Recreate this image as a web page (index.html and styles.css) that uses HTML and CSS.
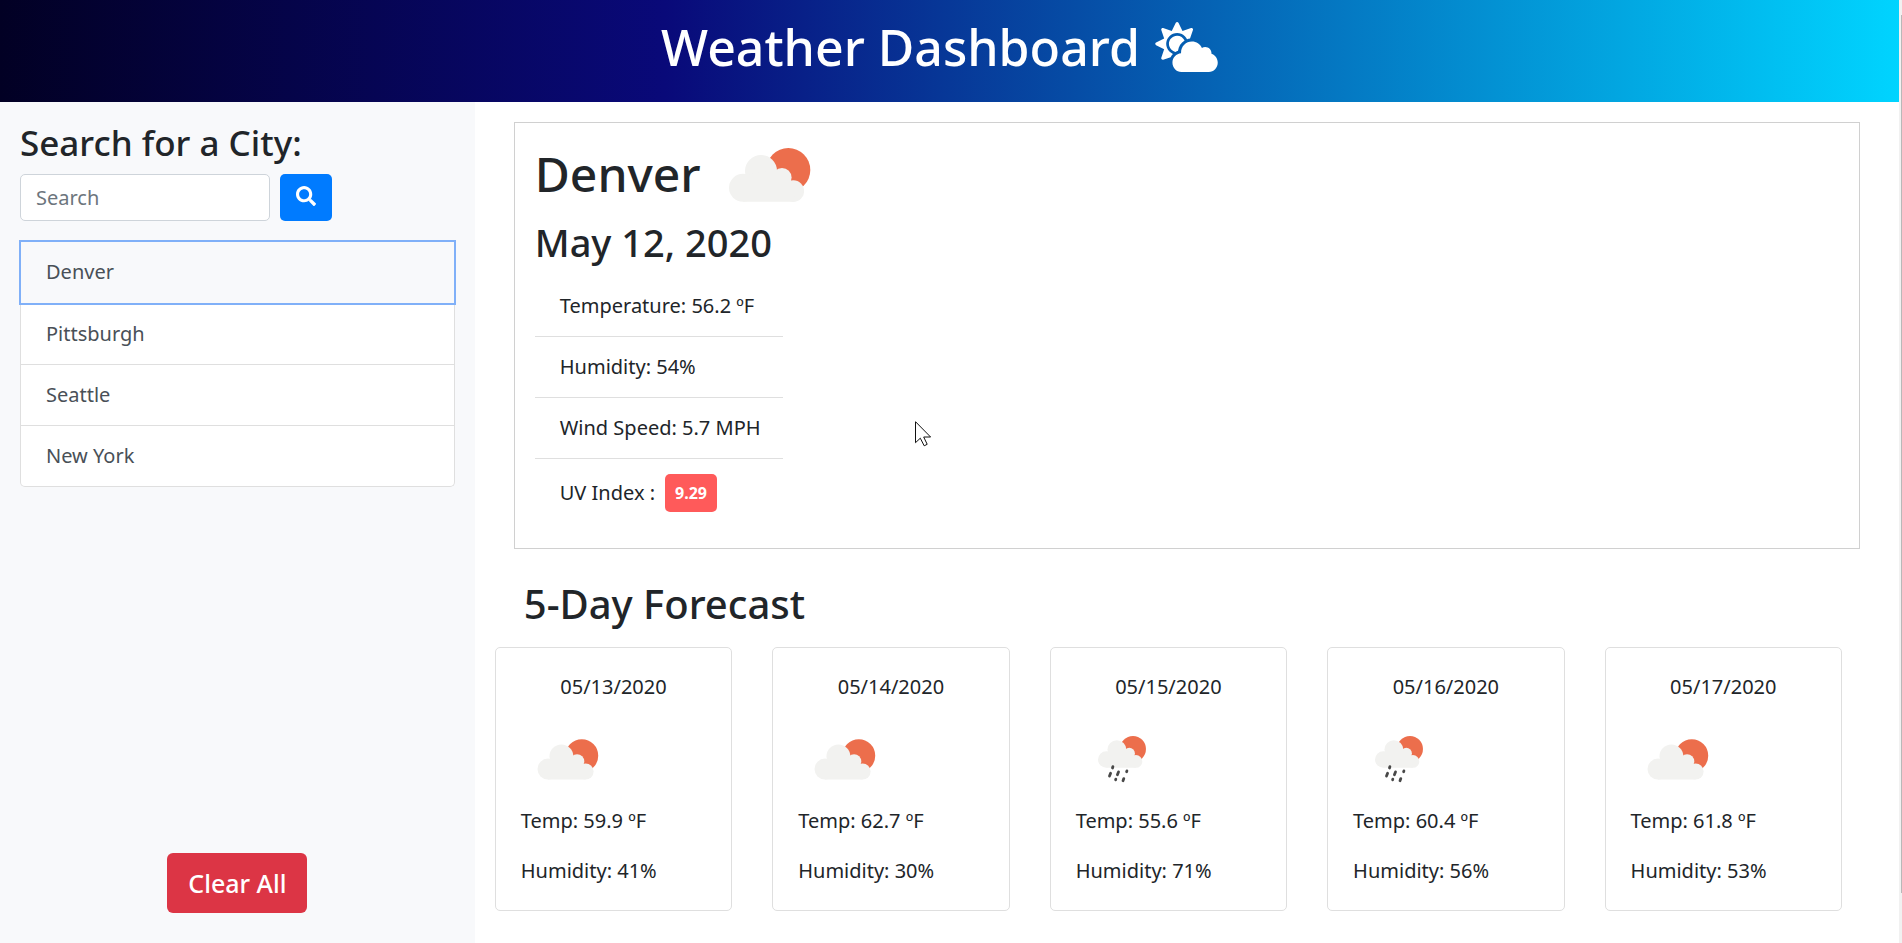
FILE: index.html
```html
<!DOCTYPE html>
<html lang="en">
<head>
<meta charset="utf-8">
<title>Weather Dashboard</title>
<link rel="stylesheet" href="styles.css">
</head>
<body>
<svg class="defs" aria-hidden="true">
  <defs>
    <g id="sun-cloud">
      <circle cx="59.3" cy="22" r="22" fill="#ec6e4c"/>
      <g fill="#f2f2f0">
        <circle cx="14" cy="39.8" r="14"/>
        <circle cx="32" cy="23" r="16"/>
        <circle cx="53" cy="29.5" r="9.6"/>
        <circle cx="64.3" cy="43.1" r="10.8"/>
        <path d="M14 26.5H20L46 22 53 29 62 34 66 44 64.3 53.8H14Z"/>
      </g>
    </g>
    <symbol id="partly-cloudy" viewBox="0 0 94 94">
      <use href="#sun-cloud" transform="translate(16.5 27.3) scale(.747)"/>
    </symbol>
    <symbol id="showers" viewBox="0 0 94 94">
      <use href="#sun-cloud" transform="translate(22 24) scale(.59)"/>
      <g transform="translate(22 24)" stroke="#484848" stroke-width="2.8" stroke-linecap="round">
        <path d="M14.9 30.7L14.5 32M12.6 37.3L11.5 40.1M20.5 35.9L19.4 38.7M17.8 43.2L17.6 43.8M28.9 34.9L28.6 35.7M25.8 42.6L25 44.8"/>
      </g>
    </symbol>
  </defs>
</svg>

<div class="page">
  <header class="banner">
    <h1 class="banner-title">Weather Dashboard
      <svg class="banner-icon" viewBox="0 0 640 512" aria-hidden="true"><path fill="currentColor" d="M575.2 325.7c.2-1.9.8-3.7.8-5.6 0-35.3-28.7-64-64-64-12.6 0-24.2 3.8-34.1 10-17.6-38.8-56.5-66-101.9-66-61.8 0-112 50.1-112 112 0 3 .7 5.8.9 8.7-49.6 3.7-88.9 44.7-88.9 95.3 0 53 43 96 96 96h272c53 0 96-43 96-96 0-42.1-27.2-77.4-64.8-90.4zm-430.4-22.6c-43.7-43.7-43.7-114.7 0-158.3 43.7-43.7 114.7-43.7 158.4 0 9.7 9.7 16.9 20.9 22.3 32.7 9.8-3.7 20.1-6 30.7-7.5L386 81.1c4-11.9-7.3-23.1-19.2-19.2L279 91.2 237.5 8.4C232-2.8 216-2.8 210.4 8.4L169 91.2 81.1 61.9C69.3 58 58 69.3 61.9 81.1l29.3 87.8-82.8 41.5c-11.2 5.6-11.2 21.5 0 27.1l82.8 41.4-29.3 87.8c-4 11.9 7.3 23.1 19.2 19.2l76.1-25.3c6.1-12.4 14-23.7 23.6-33.5-13.1-5.4-25.4-13.4-36-24zm-4.8-79.2c0 40.8 29.3 74.8 67.9 82.3 8-4.7 16.3-8.8 25.2-11.7 5.4-44.3 31-82.5 67.4-105C287.3 160.4 258 140 224 140c-46.3 0-84 37.6-84 83.9z"/></svg>
    </h1>
  </header>

  <div class="columns">
    <aside class="sidebar">
      <h3 class="search-title"><label for="city">Search for a City:</label></h3>
      <form class="search">
        <input class="search-input" id="city" type="text" placeholder="Search">
        <button class="search-button" type="button" aria-label="Search">
          <svg class="search-icon" viewBox="0 0 512 512" aria-hidden="true"><path fill="currentColor" d="M505 442.7L405.3 343c-4.5-4.5-10.6-7-17-7H372c27.6-35.3 44-79.7 44-128C416 93.1 322.9 0 208 0S0 93.1 0 208s93.1 208 208 208c48.3 0 92.7-16.4 128-44v16.3c0 6.4 2.5 12.5 7 17l99.7 99.7c9.4 9.4 24.6 9.4 33.9 0l28.3-28.3c9.4-9.4 9.4-24.6.1-34zM208 336c-70.7 0-128-57.2-128-128 0-70.7 57.2-128 128-128 70.7 0 128 57.2 128 128 0 70.7-57.2 128-128 128z"/></svg>
        </button>
      </form>
      <div class="cities">
        <button class="city city-active" type="button">Denver</button>
        <button class="city" type="button">Pittsburgh</button>
        <button class="city" type="button">Seattle</button>
        <button class="city" type="button">New York</button>
      </div>
      <button class="clear" type="button">Clear All</button>
    </aside>

    <main class="content">
      <section class="current">
        <h1 class="current-city">Denver
          <svg class="current-icon" viewBox="0 0 82 54" aria-hidden="true"><use href="#sun-cloud"/></svg>
        </h1>
        <h2 class="current-date">May 12, 2020</h2>
        <ul class="readings">
          <li class="reading">Temperature: 56.2 ºF</li>
          <li class="reading">Humidity: 54%</li>
          <li class="reading">Wind Speed: 5.7 MPH</li>
          <li class="reading">UV Index : <span class="uv">9.29</span></li>
        </ul>
      </section>

      <h2 class="forecast-title">5-Day Forecast</h2>
      <section class="forecast">
        <article class="card">
          <p class="card-date">05/13/2020</p>
          <svg class="card-icon" aria-hidden="true"><use href="#partly-cloudy"/></svg>
          <p class="card-line">Temp: 59.9 ºF</p>
          <p class="card-line">Humidity: 41%</p>
        </article>
        <article class="card">
          <p class="card-date">05/14/2020</p>
          <svg class="card-icon" aria-hidden="true"><use href="#partly-cloudy"/></svg>
          <p class="card-line">Temp: 62.7 ºF</p>
          <p class="card-line">Humidity: 30%</p>
        </article>
        <article class="card">
          <p class="card-date">05/15/2020</p>
          <svg class="card-icon" aria-hidden="true"><use href="#showers"/></svg>
          <p class="card-line">Temp: 55.6 ºF</p>
          <p class="card-line">Humidity: 71%</p>
        </article>
        <article class="card">
          <p class="card-date">05/16/2020</p>
          <svg class="card-icon" aria-hidden="true"><use href="#showers"/></svg>
          <p class="card-line">Temp: 60.4 ºF</p>
          <p class="card-line">Humidity: 56%</p>
        </article>
        <article class="card">
          <p class="card-date">05/17/2020</p>
          <svg class="card-icon" aria-hidden="true"><use href="#partly-cloudy"/></svg>
          <p class="card-line">Temp: 61.8 ºF</p>
          <p class="card-line">Humidity: 53%</p>
        </article>
      </section>
    </main>
  </div>
</div>
<div class="scroll-track"><div class="scroll-thumb"></div></div>
<svg class="pointer" viewBox="0 0 17 26" aria-hidden="true"><path d="M.5 .7V21.7L5.3 17.2L9.2 24.8L12.2 23.3L8.7 16H15.6Z" fill="#fff" stroke="#111" stroke-width="1"/></svg>
</body>
</html>
```
FILE: styles.css
```css
* {
  box-sizing: border-box;
}

body {
  position: relative;
  display: flex;
  min-height: 100vh;
  margin: 0;
  background: #fff;
  color: #212529;
  font: 400 20px/30px "Noto Sans", "Open Sans", sans-serif;
}

h1, h2, h3, p, ul {
  margin: 0;
  padding: 0;
}

h1, h2, h3 {
  font-weight: 500;
}

button, input {
  font: inherit;
}

.defs {
  position: absolute;
  width: 0;
  height: 0;
}

.page {
  display: flex;
  flex: 1;
  flex-direction: column;
}

.banner {
  padding: 16px 20px 24px;
  background: linear-gradient(90deg, #020024 0%, #090979 35%, #00d4ff 100%);
  color: #fff;
}

.banner-title {
  display: flex;
  align-items: center;
  justify-content: center;
  gap: 15px;
  padding-right: 20px;
  font-size: 50px;
  line-height: 62px;
}

.banner-icon {
  width: 63px;
  height: 50px;
}

.columns {
  display: flex;
  flex: 1;
}

.sidebar {
  display: flex;
  flex-direction: column;
  width: 25%;
  padding: 20px 20px 30px;
  background: #f8f9fb;
}

.search-title {
  margin-bottom: 10px;
  font-size: 35px;
  line-height: 42px;
}

.search {
  display: flex;
  gap: 10px;
  margin-bottom: 20px;
}

.search-input {
  width: 250px;
  height: 47px;
  padding: 0 15px;
  border: 1px solid #ced4da;
  border-radius: 5px;
  background: #fff;
}

.search-input::placeholder {
  color: #6c757d;
}

.search-button {
  display: grid;
  place-items: center;
  width: 52px;
  padding: 0 0 3px;
  border: 0;
  border-radius: 5px;
  background: #007bff;
  color: #fff;
}

.search-icon {
  width: 20px;
  height: 20px;
}

.cities {
  display: flex;
  flex-direction: column;
}

.city {
  padding: 15px 25px;
  border: 1px solid #dfdfdf;
  border-top: 0;
  background: #fff;
  color: #495057;
  text-align: left;
}

.city:last-child {
  border-radius: 0 0 5px 5px;
}

.city-active {
  z-index: 1;
  padding-top: 16px;
  padding-bottom: 16px;
  outline: 2px solid #80b0f8;
  outline-offset: -1px;
  background: #f8f9fb;
}

.clear {
  align-self: center;
  margin-top: auto;
  padding: 11px 21px;
  border: 0;
  border-radius: 6px;
  background: #dc3545;
  color: #fff;
  font-size: 25px;
  font-weight: 500;
  line-height: 38px;
}

.content {
  flex: 1;
  padding: 20px 39px 30px;
}

.current {
  padding: 21px 20px;
  border: 1px solid #d0d0d0;
}

.current-city {
  display: flex;
  align-items: center;
  gap: 28px;
  font-size: 48px;
  line-height: 60px;
}

.current-icon {
  width: 82px;
  height: 54px;
  margin-top: 2px;
}

.current-date {
  margin: 14px 0 10px;
  font-size: 38px;
  line-height: 48px;
}

.readings {
  width: 248px;
  list-style: none;
}

.reading {
  display: flex;
  align-items: center;
  gap: 10px;
  padding: 15px 25px;
  border-bottom: 1px solid #dfdfdf;
  white-space: nowrap;
}

.reading:last-child {
  border-bottom: 0;
}

.uv {
  padding: 4px 10px;
  border-radius: 5px;
  background: #ff5a5a;
  color: #fff;
  font-size: 16px;
  font-weight: 700;
}

.forecast-title {
  margin: 31px 10px 19px;
  font-size: 40px;
  line-height: 48px;
}

.forecast {
  display: flex;
  gap: 40px;
  margin: 0 18px 0 -19px;
}

.card {
  display: flex;
  flex: 1;
  flex-direction: column;
  gap: 20px;
  padding: 24px 25px;
  border: 1px solid #dfdfdf;
  border-radius: 5px;
}

.card-date {
  text-align: center;
}

.card-icon {
  width: 94px;
  height: 94px;
  margin: -10px 0 -20px;
}

.pointer {
  position: absolute;
  top: 421px;
  left: 915px;
  width: 17px;
  height: 26px;
}

.scroll-track {
  width: 3px;
  padding: 15px 0 50px 2px;
  background: #f1f1f1;
}

.scroll-thumb {
  height: 100%;
  background: #b8b8b8;
}
```
